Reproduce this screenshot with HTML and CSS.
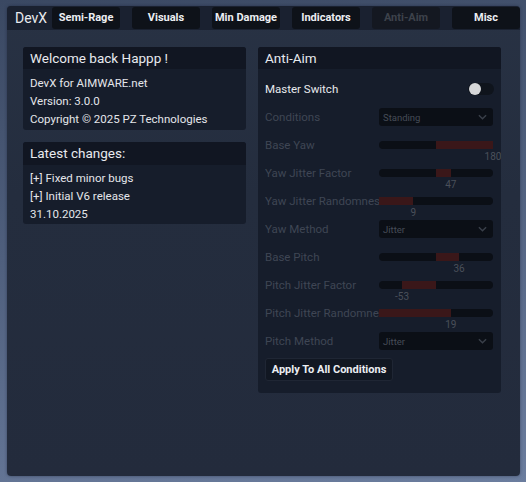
FILE: index.html
```html
<!DOCTYPE html>
<html>
<head>
<meta charset="utf-8">
<link rel="stylesheet" href="styles.css">
</head>
<body>
<div class="window">
  <div class="topbar">
    <div class="brand">DevX</div>
    <div class="tabs">
      <div class="tab">Semi-Rage</div>
      <div class="tab">Visuals</div>
      <div class="tab">Min Damage</div>
      <div class="tab">Indicators</div>
      <div class="tab active">Anti-Aim</div>
      <div class="tab">Misc</div>
    </div>
  </div>
  <div class="content">
    <div class="col-left">
      <div class="panel p-welcome">
        <div class="panel-head">Welcome back Happp !</div>
        <div class="panel-body">
          <div class="line">DevX for AIMWARE.net</div>
          <div class="line">Version: 3.0.0</div>
          <div class="line">Copyright © 2025 PZ Technologies</div>
        </div>
      </div>
      <div class="panel p-changes">
        <div class="panel-head">Latest changes:</div>
        <div class="panel-body">
          <div class="line">[+] Fixed minor bugs</div>
          <div class="line">[+] Initial V6 release</div>
          <div class="line">31.10.2025</div>
        </div>
      </div>
    </div>
    <div class="col-right">
      <div class="panel p-aa">
        <div class="panel-head">Anti-Aim</div>
        <div class="aa-body">
          <div class="row">
            <div class="label on">Master Switch</div>
            <div class="toggle"><span class="knob"></span></div>
          </div>
          <div class="row">
            <div class="label">Conditions</div>
            <div class="select"><span>Standing</span><svg class="chev" viewBox="0 0 10 6" width="9" height="6"><path d="M1 1 L5 5 L9 1" fill="none" stroke="#3a404a" stroke-width="1.6"/></svg></div>
          </div>
          <div class="row">
            <div class="label">Base Yaw</div>
            <div class="slider"><div class="fill" style="left:50%;width:50%"></div><div class="val" style="left:100%">180</div></div>
          </div>
          <div class="row">
            <div class="label">Yaw Jitter Factor</div>
            <div class="slider"><div class="fill" style="left:50%;width:13%"></div><div class="val" style="left:63%">47</div></div>
          </div>
          <div class="row">
            <div class="label">Yaw Jitter Randomness</div>
            <div class="slider"><div class="fill" style="left:0;width:30%"></div><div class="val" style="left:30%">9</div></div>
          </div>
          <div class="row">
            <div class="label">Yaw Method</div>
            <div class="select"><span>Jitter</span><svg class="chev" viewBox="0 0 10 6" width="9" height="6"><path d="M1 1 L5 5 L9 1" fill="none" stroke="#3a404a" stroke-width="1.6"/></svg></div>
          </div>
          <div class="row">
            <div class="label">Base Pitch</div>
            <div class="slider"><div class="fill" style="left:50%;width:20.2%"></div><div class="val" style="left:70.2%">36</div></div>
          </div>
          <div class="row">
            <div class="label">Pitch Jitter Factor</div>
            <div class="slider"><div class="fill" style="left:20.2%;width:29.8%"></div><div class="val" style="left:20.2%">-53</div></div>
          </div>
          <div class="row">
            <div class="label">Pitch Jitter Randomness</div>
            <div class="slider"><div class="fill" style="left:0;width:63%"></div><div class="val" style="left:63%">19</div></div>
          </div>
          <div class="row">
            <div class="label">Pitch Method</div>
            <div class="select"><span>Jitter</span><svg class="chev" viewBox="0 0 10 6" width="9" height="6"><path d="M1 1 L5 5 L9 1" fill="none" stroke="#3a404a" stroke-width="1.6"/></svg></div>
          </div>
          <div class="btn">Apply To All Conditions</div>
        </div>
      </div>
    </div>
  </div>
</div>
</body>
</html>
```
FILE: styles.css
```css
html, body {
  margin: 0;
  padding: 0;
}
body {
  width: 526px;
  height: 482px;
  overflow: hidden;
  background: linear-gradient(170deg, #3a4862 0%, #4f5f7d 45%, #6b7d9e 100%);
  font-family: Roboto, "Liberation Sans", sans-serif;
  color: #e4e6ea;
  padding: 6px 0 0 7px;
  box-sizing: border-box;
}
.window {
  width: 513px;
  height: 470px;
  border-radius: 4px;
  background: linear-gradient(180deg, #283244 0%, #242d3e 40%, #232b3c 100%);
  box-shadow: 0 0 3px rgba(20, 28, 45, 0.5);
  overflow: hidden;
}
.topbar {
  height: 23px;
  background: #1a2130;
  display: flex;
  align-items: stretch;
  padding-top: 1px;
}
.brand {
  width: 46px;
  font-size: 14px;
  padding-left: 8px;
  line-height: 22px;
  color: #e8eaee;
  box-sizing: border-box;
}
.tabs {
  display: flex;
  gap: 12px;
}
.tab {
  width: 68px;
  height: 22px;
  background: #0e1219;
  border-radius: 3px;
  font-size: 11px;
  font-weight: bold;
  text-align: center;
  line-height: 22px;
  color: #eceef2;
}
.tab.active {
  background: #141821;
  color: #3d424b;
}
.content {
  display: flex;
  gap: 12px;
  padding: 17px 0 0 16px;
}
.col-left {
  width: 223px;
  display: flex;
  flex-direction: column;
  gap: 12px;
}
.col-right {
  width: 243px;
}
.panel {
  background: #161d2b;
  border-radius: 3px;
  overflow: hidden;
}
.panel-head {
  height: 22px;
  background: #111622;
  font-size: 13.5px;
  line-height: 22px;
  padding-left: 7px;
  color: #e8eaee;
}
.p-changes .panel-head {
  height: 23px;
  line-height: 23px;
}
.panel-body {
  padding: 5px 0 2px 7px;
}
.p-changes .panel-body {
  padding: 4px 0 1px 7px;
}
.line {
  font-size: 11.5px;
  line-height: 18px;
  height: 18px;
  white-space: nowrap;
}
.aa-body {
  padding: 6px 8px 12px 7px;
}
.row {
  height: 28px;
  display: flex;
  align-items: center;
}
.label {
  width: 114px;
  flex: none;
  overflow: hidden;
  white-space: nowrap;
  font-size: 11.5px;
  color: #3f4654;
}
.label.on {
  color: #e8eaee;
}
.toggle {
  margin-left: auto;
  margin-right: -1px;
  width: 26px;
  height: 12px;
  border-radius: 6px;
  background: #0f141c;
  position: relative;
}
.knob {
  position: absolute;
  left: 1px;
  top: 0;
  width: 12px;
  height: 12px;
  border-radius: 50%;
  background: #d6d7d9;
}
.select {
  width: 114px;
  height: 18px;
  background: #0b0f16;
  border-radius: 3px;
  display: flex;
  align-items: center;
  justify-content: space-between;
  padding: 0 6px 0 4px;
  box-sizing: border-box;
  font-size: 9.5px;
  color: #464c56;
}
.chev {
  display: block;
}
.slider {
  width: 114px;
  height: 8px;
  border-radius: 4px;
  background: #0b0f16;
  position: relative;
}
.fill {
  position: absolute;
  top: 0;
  bottom: 0;
  background: #3a1719;
}
.val {
  position: absolute;
  top: 10px;
  transform: translateX(-50%);
  font-size: 10px;
  line-height: 12px;
  color: #4a505a;
  white-space: nowrap;
}
.btn {
  margin-top: 3px;
  width: 128px;
  height: 23px;
  box-sizing: border-box;
  background: #111722;
  border: 1px solid #1f2634;
  border-radius: 3px;
  font-size: 11px;
  font-weight: bold;
  line-height: 21px;
  text-align: center;
  color: #eceef2;
}
```
